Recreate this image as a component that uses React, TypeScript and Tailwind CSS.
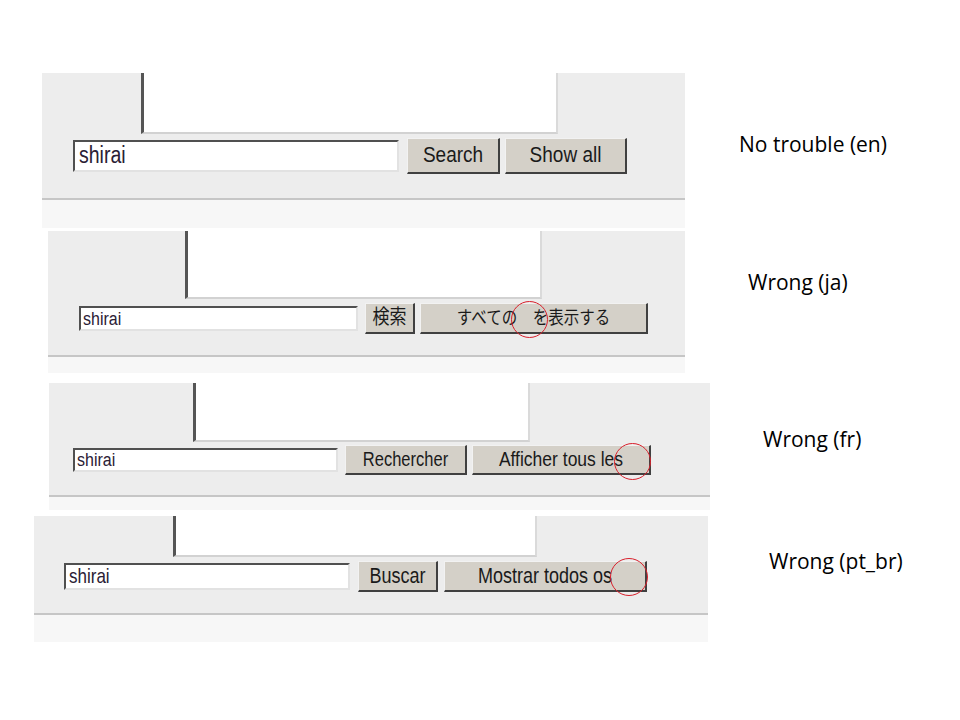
type Btn = {
  text: string;
  cls: string;
  circle?: string;
};

type Panel = {
  rowCls: string;
  grayCls: string;
  areaCls: string;
  lineCls: string;
  inputCls: string;
  sepCls: string;
  bandCls: string;
  buttons: Btn[];
  label: string;
  labelCls: string;
};

const panels: Panel[] = [
  {
    rowCls: "",
    grayCls: "ml-[42px] w-[643px] h-[125px]",
    areaCls: "ml-[99px] w-[417px] h-[61px]",
    lineCls: "mt-[4px] ml-[31px] gap-[7px] h-[36px]",
    inputCls: "w-[326px] h-[32px] pl-[4px] text-[19.5px]",
    sepCls: "ml-[42px] w-[643px]",
    bandCls: "ml-[42px] w-[643px] h-[28px]",
    buttons: [
      { text: "Search", cls: "w-[93px] h-[36px] text-[19px]" },
      { text: "Show all", cls: "w-[122px] h-[36px] text-[19px] ml-[-2px]" },
    ],
    label: "No trouble (en)",
    labelCls: "ml-[54px] mt-[57px]",
  },
  {
    rowCls: "mt-[3px]",
    grayCls: "ml-[48px] w-[637px] h-[124px]",
    areaCls: "ml-[137px] w-[357px] h-[68px]",
    lineCls: "mt-[4px] ml-[31px] gap-[6px] h-[31px]",
    inputCls: "w-[279px] h-[25px] pl-[2px] text-[16px]",
    sepCls: "ml-[48px] w-[637px]",
    bandCls: "ml-[48px] w-[637px] h-[16px]",
    buttons: [
      { text: "検索", cls: "w-[50px] h-[31px] text-[17px]" },
      {
        text: "すべての　を表示する",
        cls: "w-[228px] h-[31px] text-[15.5px] ml-[-1px]",
        circle: "left-[90px] top-[-3px] w-[37px] h-[37px]",
      },
    ],
    label: "Wrong (ja)",
    labelCls: "ml-[63px] mt-[37px]",
  },
  {
    rowCls: "mt-[10px]",
    grayCls: "ml-[49px] w-[661px] h-[112px]",
    areaCls: "ml-[144px] w-[337px] h-[59px]",
    lineCls: "mt-[3px] ml-[24px] gap-[5px] h-[30px]",
    inputCls: "w-[265px] h-[24px] pl-[2px] text-[16px]",
    sepCls: "ml-[49px] w-[661px]",
    bandCls: "ml-[49px] w-[661px] h-[13px]",
    buttons: [
      { text: "Rechercher", cls: "w-[122px] h-[30px] text-[16.5px] ml-[1px]" },
      {
        text: "Afficher tous les",
        cls: "w-[179px] h-[30px] text-[17.5px]",
        circle: "left-[141px] top-[-3px] w-[37px] h-[37px]",
      },
    ],
    label: "Wrong (fr)",
    labelCls: "ml-[53px] mt-[42px]",
  },
  {
    rowCls: "mt-[6px]",
    grayCls: "ml-[34px] w-[674px] h-[97px]",
    areaCls: "ml-[139px] w-[364px] h-[41px]",
    lineCls: "mt-[4px] ml-[30px] gap-[6px] h-[31px]",
    inputCls: "w-[286px] h-[27px] pl-[3px] text-[17px]",
    sepCls: "ml-[34px] w-[674px]",
    bandCls: "ml-[34px] w-[674px] h-[27px]",
    buttons: [
      { text: "Buscar", cls: "w-[80px] h-[31px] text-[18px] ml-[1px]" },
      {
        text: "Mostrar todos os",
        cls: "w-[203px] h-[31px] text-[18px]",
        circle: "left-[165px] top-[-4px] w-[38px] h-[38px]",
      },
    ],
    label: "Wrong (pt_br)",
    labelCls: "ml-[61px] mt-[31px]",
  },
];

function ClassicButton({ btn }: { btn: Btn }) {
  return (
    <div
      className={`relative flex items-center justify-center shrink-0 bg-[#d4d0c8] border-t border-l border-t-[#f2f2f2] border-l-[#f2f2f2] border-b-2 border-r-2 border-b-[#404040] border-r-[#404040] text-[#1a1a1a] whitespace-nowrap ${btn.cls}`}
    >
      <span className="inline-block scale-y-[1.18]">{btn.text}</span>
      {btn.circle && (
        <span
          className={`absolute rounded-full border-[1.5px] border-[#d9202c] ${btn.circle}`}
        />
      )}
    </div>
  );
}

function SearchPanel({ p }: { p: Panel }) {
  return (
    <div className="flex flex-col shrink-0">
      <div className={`flex flex-col bg-[#ededed] ${p.grayCls}`}>
        <div
          className={`bg-white border-l-[3px] border-l-[#555555] border-r-2 border-r-[#dadada] border-b-2 border-b-[#d2d2d2] ${p.areaCls}`}
        />
        <div className={`flex items-center ${p.lineCls}`}>
          <div
            className={`flex items-center shrink-0 bg-white border-t-2 border-l-2 border-t-[#505050] border-l-[#505050] border-b-2 border-r-2 border-b-[#e2e2e2] border-r-[#e2e2e2] text-[#2a2034] mr-[1px] ${p.inputCls}`}
          >
            <span className="inline-block scale-y-[1.18]">shirai</span>
          </div>
          {p.buttons.map((b) => (
            <ClassicButton key={b.text} btn={b} />
          ))}
        </div>
      </div>
      <div className={`h-[2px] bg-[#c6c6c6] ${p.sepCls}`} />
      <div className={`bg-[#f7f7f7] ${p.bandCls}`} />
    </div>
  );
}

export default function App() {
  return (
    <div className="w-[960px] h-[720px] bg-white pt-[73px] font-['Liberation_Sans',Arial,'Noto_Sans_CJK_JP',sans-serif] overflow-hidden">
      {panels.map((p) => (
        <div key={p.label} className={`flex items-start ${p.rowCls}`}>
          <SearchPanel p={p} />
          <p
            className={`font-['Open_Sans',sans-serif] text-[21px] leading-[28px] text-black whitespace-nowrap ${p.labelCls}`}
          >
            {p.label}
          </p>
        </div>
      ))}
    </div>
  );
}
